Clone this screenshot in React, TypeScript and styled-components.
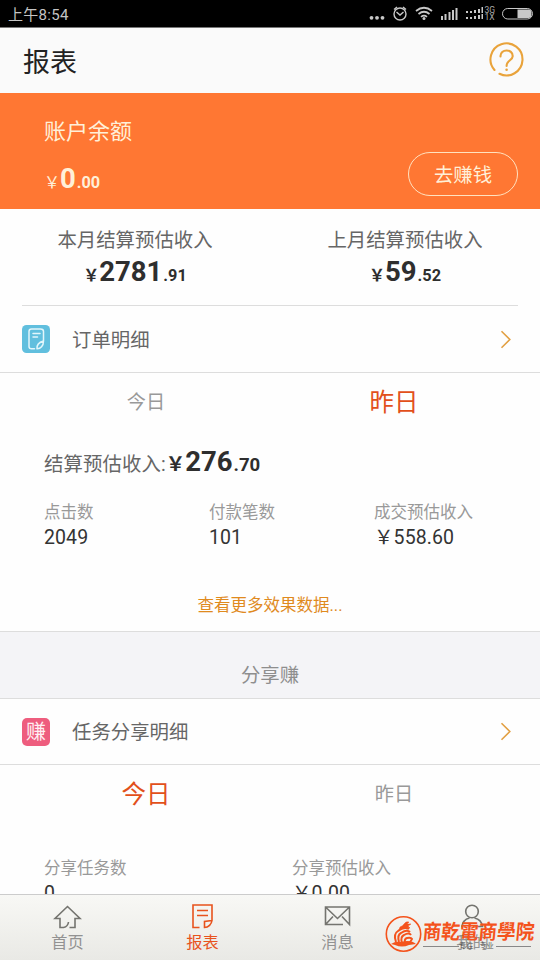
import React from "react";
import styled, { createGlobalStyle } from "styled-components";

const GlobalStyle = createGlobalStyle`
  * { box-sizing: border-box; }
  body {
    margin: 0;
    background: #fff;
    font-family: Roboto, "Noto Sans CJK SC", sans-serif;
    font-weight: 400;
  }
`;

const Screen = styled.div`
  position: relative;
  width: 540px;
  height: 960px;
  overflow: hidden;
  display: flex;
  flex-direction: column;
  background: #fefefe;
  color: #666;
`;

const StatusBar = styled.header`
  flex: none;
  height: 28px;
  padding: 0 4px 0 8px;
  display: flex;
  align-items: center;
  justify-content: space-between;
  background: #000;
  color: #c4c4c4;
  font-size: 15px;
  border-bottom: 1px solid #777;
`;

const Clock = styled.span`
  padding-top: 3px;
  line-height: 24px;
  letter-spacing: 0.3px;
`;

const TitleBar = styled.div`
  flex: none;
  height: 65px;
  padding: 0 16px 2px 23px;
  display: flex;
  align-items: center;
  justify-content: space-between;
  background: #fafafa;
`;

const Title = styled.h1`
  margin: 0;
  padding-top: 6px;
  font-size: 27px;
  line-height: 40px;
  font-weight: 400;
  color: #222;
`;

const Balance = styled.section`
  flex: none;
  height: 116px;
  padding: 24px 22px 0 44px;
  display: flex;
  justify-content: space-between;
  background: #ff7733;
  color: #fff0d8;
`;

const BalanceLabel = styled.div`
  font-size: 22px;
  line-height: 30px;
`;

const Money = styled.div<{ $gap?: number; $cents?: number }>`
  display: flex;
  align-items: baseline;
  line-height: 32px;
  font-size: ${(p) => p.$cents ?? 16.3}px;
  font-weight: 700;
  color: ${(p) => p.color ?? "#2e2e2e"};
  margin-top: ${(p) => p.$gap ?? 0}px;
`;

const Yen = styled.span<{ $size: number; $light?: boolean }>`
  font-size: ${(p) => p.$size}px;
  font-weight: ${(p) => (p.$light ? 400 : 700)};
  line-height: 20px;
`;

const Whole = styled.span`
  font-size: 27.5px;
  margin-right: 1px;
`;

const EarnButton = styled.button`
  width: 110px;
  height: 44px;
  margin-top: 35px;
  padding: 4px 0 0;
  border: 1px solid #ffe2c0;
  border-radius: 22px;
  background: transparent;
  color: #fff0d8;
  font: inherit;
  font-size: 19.4px;
  line-height: 38px;
`;

const Months = styled.section`
  flex: none;
  height: 97px;
  margin: 0 22px;
  padding-top: 18px;
  display: grid;
  grid-template-columns: 226px 1fr;
  border-bottom: 1px solid #ddd;
`;

const Month = styled.div<{ $shift: number }>`
  display: flex;
  flex-direction: column;
  align-items: center;
  padding-left: ${(p) => p.$shift}px;
  white-space: nowrap;
`;

const MonthLabel = styled.div`
  font-size: 19.4px;
  line-height: 28px;
`;

const LinkRow = styled.div<{ $height: number }>`
  flex: none;
  height: ${(p) => p.$height}px;
  padding: 0 28px 0 22px;
  display: flex;
  align-items: center;
  border-bottom: 1px solid #ddd;
`;

const LinkLabel = styled.span`
  flex: 1;
  margin-left: 22px;
  padding-top: 3px;
  font-size: 19.4px;
  line-height: 28px;
`;

const Tabs = styled.div`
  flex: none;
  height: 56px;
  padding: 1px 22px 0;
  display: grid;
  grid-template-columns: 1fr 1fr;
  text-align: center;
`;

const Tab = styled.span<{ $active?: boolean }>`
  font-size: ${(p) => (p.$active ? 24.5 : 19.2)}px;
  line-height: ${(p) => (p.$active ? 57 : 57)}px;
  color: ${(p) => (p.$active ? "#e2501b" : "#999")};
`;

const Summary = styled.div`
  flex: none;
  height: 32px;
  margin-top: 17px;
  padding-left: 44px;
  display: flex;
  align-items: baseline;
  font-size: 19.4px;
  line-height: 32px;
`;

const SummaryLabel = styled.span`
  letter-spacing: 0.1px;
`;

const Metrics = styled.div<{ $columns: string; $top: number; $height: number }>`
  flex: none;
  height: ${(p) => p.$height}px;
  margin-top: ${(p) => p.$top}px;
  padding-left: 44px;
  display: grid;
  grid-template-columns: ${(p) => p.$columns};
`;

const MetricLabel = styled.div`
  font-size: 16.5px;
  line-height: 24px;
  color: #999;
`;

const MetricValue = styled.div`
  font-size: 19.5px;
  line-height: 25px;
  letter-spacing: 0.1px;
  color: #333;
`;

const More = styled.a`
  flex: none;
  height: 81px;
  padding-top: 44px;
  text-align: center;
  font-size: 16.5px;
  line-height: 24px;
  color: #e08a1e;
`;

const SectionBand = styled.div`
  flex: none;
  height: 68px;
  padding-top: 20px;
  border: solid #ddd;
  border-width: 1px 0;
  background: #f4f4f7;
  text-align: center;
  font-size: 19.4px;
  line-height: 48px;
  color: #8e8e8e;
`;

const NavBar = styled.nav`
  position: absolute;
  inset: auto 0 0 0;
  height: 66px;
  display: grid;
  grid-template-columns: repeat(4, 1fr);
  background: linear-gradient(#f8f8f5, #e9e9e5);
  border-top: 1px solid #ccc;
`;

const NavItem = styled.div<{ $active?: boolean }>`
  padding-top: 7px;
  display: flex;
  flex-direction: column;
  align-items: center;
  gap: 1px;
  font-size: 16.2px;
  line-height: 22px;
  color: ${(p) => (p.$active ? "#e8531d" : "#929292")};
  svg { color: ${(p) => (p.$active ? "#e8531d" : "#74746f")}; }
`;

const Watermark = styled.div`
  position: absolute;
  right: 5px;
  bottom: 7px;
  display: flex;
  gap: 1px;
  color: #f4531c;
`;

const School = styled.div`
  width: 112px;
  padding-top: 2px;
`;

const SchoolName = styled.div`
  font-family: "Noto Sans CJK TC", sans-serif;
  font-size: 18.6px;
  line-height: 25px;
  font-weight: 700;
  transform: skewX(-5deg) scaleY(1.1);
  white-space: nowrap;
`;

const Motto = styled.div`
  display: flex;
  align-items: center;
  font-size: 7.2px;
  line-height: 8px;
  color: #555;
  white-space: nowrap;
`;

const Rule = styled.i<{ $width: number }>`
  width: ${(p) => p.$width}px;
  height: 1px;
  background: #888;
`;

const MottoWord = styled.span`
  margin-right: 6px;
  &:nth-of-type(2) { margin-right: 2px; }
`;

const StatusIcons = () => (
  <svg width="172" height="27" viewBox="364 0 172 27" fill="none" stroke="#c8c8c8">
    <g fill="#c8c8c8" stroke="none">
      <circle cx="371.500" cy="17.800" r="1.900" />
      <circle cx="377" cy="17.800" r="1.900" />
      <circle cx="382.500" cy="17.800" r="1.900" />
      <circle cx="424" cy="18.500" r="1.500" />
      <path d="M441 16h2v4h-2zM444.500 14h2v6h-2zM448.500 12h2v8h-2zM452 10h2v10h-2zM455.500 8h2v12h-2z" />
      <path d="M466 11h2v2h-2zM470 11h2v2h-2zM474 10h2v3h-2zM478 9h2v4h-2zM481.500 7h1.500v6h-1.500zM466 17h2v2h-2zM470 17h2v2h-2zM474 16h2v3h-2zM478 15h2v4h-2zM481.500 14h1.500v5h-1.500z" />
      <path d="M517.500 9.500h11a3 3 0 0 1 3 3v2.500a3 3 0 0 1-3 3h-11z" />
    </g>
    <circle cx="400" cy="14" r="6" strokeWidth="1.400" />
    <path d="M396.500 12l3.500 3 3.500-3M394 9.500l3-2.500M403 7l3 2.500" strokeWidth="1.400" />
    <path d="M416 11q8-6.500 16 0M418.500 14q5.500-4.500 11 0M421 16.800q3-2.400 6 0" strokeWidth="1.700" />
    <rect x="502.500" y="8.500" width="30" height="10.500" rx="5.250" />
    <g fill="#aaa" stroke="none" fontFamily="Roboto" fontSize="8.500">
      <text x="484.500" y="12.500">3G</text>
      <text x="484.500" y="20">1X</text>
    </g>
  </svg>
);

const HelpIcon = () => (
  <svg width="35" height="35" viewBox="0 0 35 35" fill="none" stroke="#e9a33b" strokeWidth="2.100" strokeLinecap="round">
    <path d="M5.500 28A16 16 0 1 1 10.500 31.800" />
    <path d="M11.500 14.500C11 6.500 24 6.500 23.700 14.200C23.500 18.500 17.600 18.200 17.600 24" />
    <circle cx="17.600" cy="27.800" r="1.300" fill="#e9a33b" stroke="none" />
  </svg>
);

const OrderIcon = () => (
  <svg width="28" height="28" viewBox="0 0 28 28" fill="none" stroke="#e2f6fb" strokeWidth="1.500" strokeLinecap="round" strokeLinejoin="round">
    <rect width="28" height="28" rx="4.500" fill="#61bfde" stroke="none" />
    <path d="M12.500 23.800H9.500Q7 23.800 7 21.500V6.500Q7 4 9.500 4H18.500Q21.500 4 21.500 6.500V16C18 17 14.500 19 15 23.800C18.500 24 21.500 21 21.500 16M11 8.500h7M11 12h4.500" />
  </svg>
);

const EarnBadge = styled.div`
  width: 28px;
  height: 28px;
  border-radius: 5px;
  background: #ee5d7e;
  color: #fff0f3;
  font-size: 20px;
  line-height: 29px;
  text-align: center;
`;

const Chevron = () => (
  <svg width="12" height="19" viewBox="0 0 12 19" fill="none" stroke="#e2a043" strokeWidth="1.600">
    <path d="M1.500 1.200L9.800 9.500 1.500 17.800" />
  </svg>
);

const NavSvg = ({ children }: { children: React.ReactNode }) => (
  <svg width="30" height="29" viewBox="0.5 0 30 29" fill="none" stroke="currentColor" strokeWidth="1.600">
    {children}
  </svg>
);

const Emblem = () => (
  <svg width="37" height="38" viewBox="0 0 37 38" fill="none" stroke="#f4531c">
    <circle cx="18.500" cy="19" r="17.200" strokeWidth="1.600" />
    <path d="M6 29q5-3 8-2l8-1q6 0 9 3l-7 1q-7 3-14 0z" fill="#f4531c" stroke="none" />
    <path d="M15 12q3-1 4-3 2-3 5-2l-2 2 4 0-3 2 2 2-5-1q-4 3-6 3z" fill="#f4531c" strokeWidth="0.500" />
    <path d="M11 27q-3-8 2-11 6-5 11-2M14 27q-2-7 2-9 6-4 9-1M17 28q-2-6 2-8 5-3 7 0M20 28q-1-4 2-5 4-1 5 1-1 3-4 4" strokeWidth="2" />
  </svg>
);

type AmountProps = {
  whole: string;
  cents: string;
  yen?: number;
  centsSize?: number;
  light?: boolean;
  color?: string;
  gap?: number;
};

const Amount = ({ whole, cents, yen = 16, centsSize, light, color, gap }: AmountProps) => (
  <Money color={color} $gap={gap} $cents={centsSize}>
    <Yen $size={yen} $light={light}>￥</Yen>
    <Whole>{whole}</Whole>
    <span>{cents}</span>
  </Money>
);

export default function App() {
  return (
    <Screen>
      <GlobalStyle />
      <StatusBar>
        <Clock>上午8:54</Clock>
        <StatusIcons />
      </StatusBar>
      <TitleBar>
        <Title>报表</Title>
        <HelpIcon />
      </TitleBar>
      <Balance>
        <div>
          <BalanceLabel>账户余额</BalanceLabel>
          <Amount whole="0" cents=".00" light color="#fff0d8" gap={16} />
        </div>
        <EarnButton>去赚钱</EarnButton>
      </Balance>
      <Months>
        <Month $shift={0}>
          <MonthLabel>本月结算预估收入</MonthLabel>
          <Amount whole="2781" cents=".91" gap={1} />
        </Month>
        <Month $shift={44}>
          <MonthLabel>上月结算预估收入</MonthLabel>
          <Amount whole="59" cents=".52" gap={1} />
        </Month>
      </Months>
      <LinkRow $height={67}>
        <OrderIcon />
        <LinkLabel>订单明细</LinkLabel>
        <Chevron />
      </LinkRow>
      <Tabs>
        <Tab>今日</Tab>
        <Tab $active>昨日</Tab>
      </Tabs>
      <Summary>
        <SummaryLabel>结算预估收入:</SummaryLabel>
        <Amount whole="276" cents=".70" yen={19.4} centsSize={18.6} />
      </Summary>
      <Metrics $columns="165px 165px 1fr" $top={23} $height={49}>
        <div>
          <MetricLabel>点击数</MetricLabel>
          <MetricValue>2049</MetricValue>
        </div>
        <div>
          <MetricLabel>付款笔数</MetricLabel>
          <MetricValue>101</MetricValue>
        </div>
        <div>
          <MetricLabel>成交预估收入</MetricLabel>
          <MetricValue>￥558.60</MetricValue>
        </div>
      </Metrics>
      <More>查看更多效果数据...</More>
      <SectionBand>分享赚</SectionBand>
      <LinkRow $height={66}>
        <EarnBadge>赚</EarnBadge>
        <LinkLabel>任务分享明细</LinkLabel>
        <Chevron />
      </LinkRow>
      <Tabs>
        <Tab $active>今日</Tab>
        <Tab>昨日</Tab>
      </Tabs>
      <Metrics $columns="248px 1fr" $top={36} $height={60}>
        <div>
          <MetricLabel>分享任务数</MetricLabel>
          <MetricValue>0</MetricValue>
        </div>
        <div>
          <MetricLabel>分享预估收入</MetricLabel>
          <MetricValue>￥0.00</MetricValue>
        </div>
      </Metrics>
      <NavBar>
        <NavItem>
          <NavSvg>
            <path d="M11.500 25.500H7.500V16.500H2.500L15 4.500 27.500 16.500H22.500V25.500H17M11 25.500Q15.500 24.500 16 20" />
          </NavSvg>
          首页
        </NavItem>
        <NavItem $active>
          <NavSvg>
            <path d="M12 25.500H5.500V3H24.500V18.500C24 22 21 25.500 17 25.500V19.500L24.500 18.500M9.500 8.500h11M9.500 13.500h11" />
          </NavSvg>
          报表
        </NavItem>
        <NavItem>
          <NavSvg>
            <path d="M20.500 22.500H3V5H27V22.500L19.500 14.500M3 5L15 16.500 27 5M3 22.500L10.500 14.500M3 22.500V5" />
          </NavSvg>
          消息
        </NavItem>
        <NavItem>
          <NavSvg>
            <circle cx="14.500" cy="9.500" r="6.300" />
            <path d="M4.500 25.500Q5 17.500 12 16M17 16Q24 17.500 25 24.500H18" />
          </NavSvg>
          我的
        </NavItem>
      </NavBar>
      <Watermark>
        <Emblem />
        <School>
          <SchoolName>商乾電商學院</SchoolName>
          <Motto>
            <Rule $width={36} />
            <MottoWord>专注</MottoWord>
            <MottoWord>专业</MottoWord>
            <Rule $width={35} />
          </Motto>
        </School>
      </Watermark>
    </Screen>
  );
}
